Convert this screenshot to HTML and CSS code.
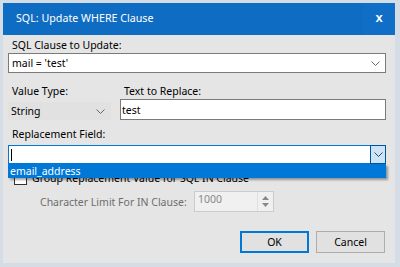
FILE: index.html
```html
<!DOCTYPE html>
<html>
<head>
<meta charset="utf-8">
<link rel="stylesheet" href="styles.css">
</head>
<body>
<div class="window">
  <div class="titlebar">
    <span class="title">SQL: Update WHERE Clause</span>
    <span class="close">x</span>
  </div>
  <div class="content">
    <div class="label">SQL Clause to Update:</div>
    <div class="combo">
      <span class="value">mail = 'test'</span>
      <svg class="chev" width="9" height="5" viewBox="0 0 9 5"><polyline points="0.5,0.5 4.5,4.5 8.5,0.5" fill="none" stroke="#666" stroke-width="1"/></svg>
    </div>
    <div class="row">
      <div class="col-left">
        <div class="label">Value Type:</div>
        <div class="select">
          <span class="value">String</span>
          <svg class="chev" width="9" height="5" viewBox="0 0 9 5"><polyline points="0.5,0.5 4.5,4.5 8.5,0.5" fill="none" stroke="#666" stroke-width="1"/></svg>
        </div>
      </div>
      <div class="col-right">
        <div class="label label-r">Text to Replace:</div>
        <div class="textbox"><span class="value">test</span></div>
      </div>
    </div>
    <div class="label label-rf">Replacement Field:</div>
    <div class="combo focused">
      <span class="caret"></span>
      <span class="dropbtn">
        <svg width="9" height="5" viewBox="0 0 9 5"><polyline points="0.5,0.5 4.5,4.5 8.5,0.5" fill="none" stroke="#444" stroke-width="1"/></svg>
      </span>
      <div class="dropdown">email_address</div>
    </div>
    <div class="checkrow">
      <span class="checkbox"></span>
      <span class="checklabel">Group Replacement Value for SQL IN Clause</span>
    </div>
    <div class="limitrow">
      <span class="limitlabel">Character Limit For IN Clause:</span>
      <div class="spinner">
        <span class="spinval">1000</span>
        <span class="spinbtns">
          <svg width="7" height="4" viewBox="0 0 7 4"><polygon points="0,4 3.5,0 7,4" fill="#888"/></svg>
          <svg width="7" height="4" viewBox="0 0 7 4"><polygon points="0,0 3.5,4 7,0" fill="#888"/></svg>
        </span>
      </div>
    </div>
    <div class="buttons">
      <div class="btn default">OK</div>
      <div class="btn">Cancel</div>
    </div>
  </div>
</div>
</body>
</html>
```

FILE: styles.css
```css
html, body {
  margin: 0;
  padding: 0;
  background: #ffffff;
}
body {
  font-family: "Noto Sans", "Open Sans", sans-serif;
  font-size: 10.5px;
  color: #000;
}
.window {
  width: 400px;
  height: 267px;
  box-sizing: border-box;
  border-left: 3px solid #d4dce6;
  border-top: 3px solid #d4dce6;
  border-right: 5px solid #d4dce6;
  border-bottom: 4px solid #d4dce6;
  background: #e5e5e5;
  display: flex;
  flex-direction: column;
}
.titlebar {
  height: 32px;
  background: #0f6cc3;
  color: #fff;
  display: flex;
  align-items: center;
  justify-content: space-between;
  flex-shrink: 0;
}
.title {
  padding-left: 13px;
  font-size: 10.7px;
  padding-bottom: 2px;
}
.close {
  width: 32px;
  height: 32px;
  display: flex;
  align-items: center;
  justify-content: center;
  font-weight: bold;
  font-size: 13px;
  font-family: "Liberation Sans", sans-serif;
  background: #106ec7;
  padding-bottom: 3px;
  box-sizing: border-box;
}
.content {
  padding: 3px 9px 0 5px;
  position: relative;
  flex: 1;
}
.label {
  height: 15px;
  line-height: 15px;
  padding-left: 4px;
}
.combo {
  position: relative;
  height: 20px;
  box-sizing: border-box;
  border: 1px solid #7a7a7a;
  background: #fff;
  display: flex;
  align-items: center;
  padding-left: 3px;
}
.value {
  font-size: 10.5px;
}
.chev {
  position: absolute;
  right: 5px;
  top: 7px;
}
.row {
  display: flex;
  margin-top: 11px;
}
.col-left {
  width: 103px;
}
.col-right {
  flex: 1;
  margin-left: 9px;
}
.label-r {
  padding-left: 4px;
}
.select {
  position: relative;
  margin-top: 3px;
  height: 18px;
  box-sizing: border-box;
  background: #e1e1e1;
  border: 1px solid #e1e1e1;
  display: flex;
  align-items: center;
  padding-left: 2px;
}
.select .chev {
  top: 6px;
}
.textbox {
  height: 21px;
  box-sizing: border-box;
  border: 1px solid #7a7a7a;
  background: #fff;
  display: flex;
  align-items: center;
  padding-left: 1px;
}
.label-rf {
  margin-top: 7px;
  margin-bottom: 3px;
}
.combo.focused {
  border-color: #0078d7;
  height: 19px;
  padding-left: 2px;
}
.caret {
  width: 1px;
  height: 12px;
  background: #000;
}
.dropbtn {
  position: absolute;
  right: -1px;
  top: -1px;
  width: 16px;
  height: 19px;
  box-sizing: border-box;
  border: 1px solid #005499;
  background: #cce4f7;
  display: flex;
  align-items: center;
  justify-content: center;
}
.dropdown {
  position: absolute;
  left: -1px;
  right: -1px;
  top: 18px;
  height: 14px;
  background: #0078d7;
  color: #fff;
  font-size: 10.5px;
  line-height: 14px;
  padding-left: 2px;
  box-shadow: 2px 2px 2px rgba(0,0,0,0.35);
  z-index: 2;
}
.checkrow {
  display: flex;
  align-items: center;
  height: 14px;
  margin-top: 7px;
  padding-left: 6px;
}
.checkbox {
  width: 11px;
  height: 11px;
  border: 1px solid #333;
  background: #fff;
  flex-shrink: 0;
}
.checklabel {
  margin-left: 5px;
}
.limitrow {
  display: flex;
  align-items: center;
  margin-top: 6px;
  padding-left: 32px;
}
.limitlabel {
  color: #6d6d6d;
  width: 154px;
  white-space: nowrap;
}
.spinner {
  width: 80px;
  height: 21px;
  box-sizing: border-box;
  border: 1px solid #cccccc;
  background: #f0f0f0;
  display: flex;
  justify-content: space-between;
}
.spinval {
  color: #888;
  font-size: 10.5px;
  padding-left: 3px;
  line-height: 15px;
}
.spinbtns {
  width: 15px;
  display: flex;
  flex-direction: column;
  align-items: center;
  justify-content: space-around;
  border-left: 1px solid #e0e0e0;
  padding: 2px 0;
}
.buttons {
  display: flex;
  justify-content: flex-end;
  gap: 7px;
  margin-top: 19px;
  padding-right: 1px;
}
.btn {
  width: 69px;
  height: 22px;
  box-sizing: border-box;
  border: 1px solid #adadad;
  background: #e1e1e1;
  display: flex;
  align-items: center;
  justify-content: center;
}
.btn.default {
  border: 2px solid #0078d7;
}
```
